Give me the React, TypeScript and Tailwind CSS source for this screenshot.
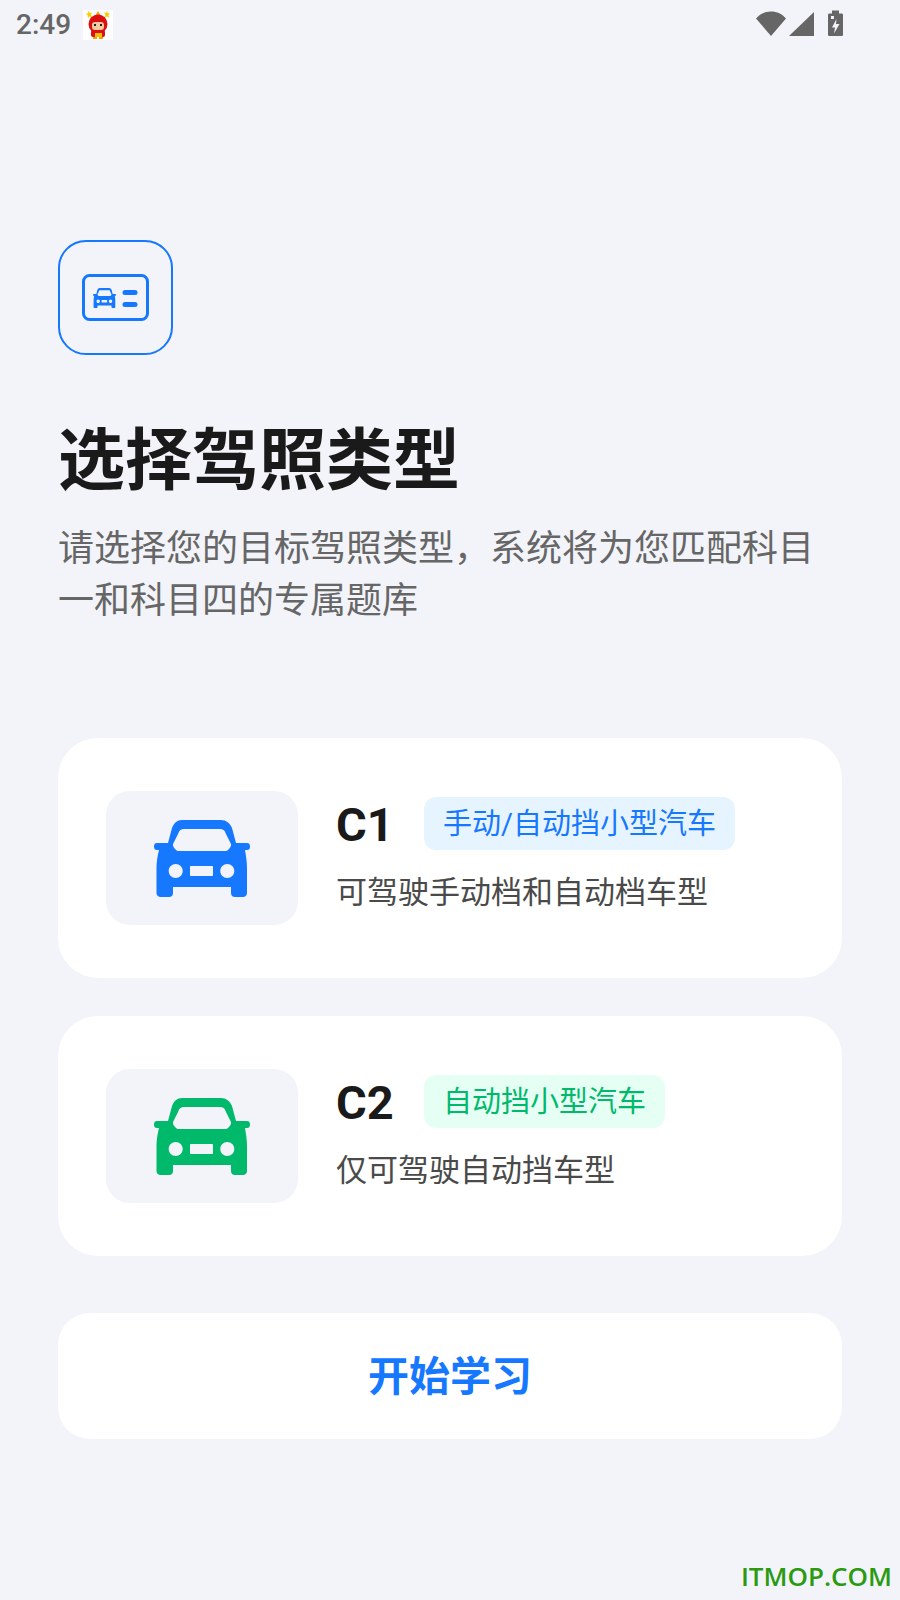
import React from 'react';

const CAR_PATH =
    'M28 0H67C72 0 76 3 78 8L82 23H93C95 23 96 24 96 26.500C96 29 95 30 93 30H91C92 36 93 42 93 48V73C93 75.500 91 77 89 77H81C78.500 77 77 75.500 77 73V67H19V73C19 75.500 17.500 77 15 77H6.500C4.500 77 2.500 75.500 2.500 73V48C2.500 42 3.500 36 5 30H3C1 30 0 29 0 26.500C0 24 1 23 3 23H14L18 8C20 3 23 0 28 0ZM30 9C27 9 25.500 10 24.500 13L19 24C18.500 26 20 28 22 30C23 31 24 31 26 31H70C72 31 73 31 74 30C76 28 77.500 26 77 24L71.500 13C70.500 10 69 9 66 9H30ZM21.700 44C17.800 44 14.700 47.100 14.700 51C14.700 54.900 17.800 58 21.700 58C25.600 58 28.700 54.900 28.700 51C28.700 47.100 25.600 44 21.700 44ZM73.300 44C69.400 44 66.300 47.100 66.300 51C66.300 54.900 69.400 58 73.300 58C77.200 58 80.300 54.900 80.300 51C80.300 47.100 77.200 44 73.300 44ZM37 46C36.400 46 36 46.400 36 47V55C36 55.600 36.400 56 37 56H58C58.600 56 59 55.600 59 55V47C59 46.400 58.600 46 58 46H37Z';

const CarIcon = ({ color }: { color: string }) => (
    <svg width="96" height="77" viewBox="0 0 96 77" fill="none" className="blur-[0.3px]">
        <path fillRule="evenodd" clipRule="evenodd" fill={color} d={CAR_PATH} />
    </svg>
);

const LicenceIcon = () => (
    <svg width="67" height="47" viewBox="0 0 67 47" fill="none" className="blur-[0.5px]">
        <rect x="1.500" y="1.500" width="64" height="44" rx="6" stroke="#1677ff" strokeWidth="3" />
        <svg x="11" y="14" width="23" height="20" viewBox="0 0 96 77" preserveAspectRatio="none">
            <path fillRule="evenodd" clipRule="evenodd" fill="#1677ff" d={CAR_PATH} />
        </svg>
        <rect x="40.500" y="16" width="15" height="5" rx="2.500" fill="#1677ff" />
        <rect x="40.500" y="28" width="15" height="5" rx="2.500" fill="#1677ff" />
    </svg>
);

// tiny pixel mascot next to the clock
const Mascot = () => (
    <svg width="30" height="30" viewBox="0 0 30 30" className="bg-white">
        <path fill="#f0a000" d="M15 1L18 6L21 9H9L12 6Z" />
        <path fill="#f5d000" d="M5 1L7 3L9 2.500L8 5L9 7L6.500 6.500L5 8L4.500 5L2.500 3.500L5 3.500Z" />
        <path fill="#f5d000" d="M24 1L25 3.500L27.500 3.500L25.500 5L26 8L24 6.500L21.500 7L22.500 5L21 2.500L23 3Z" />
        <circle cx="15" cy="14" r="9.500" fill="#dc1010" />
        <rect x="8" y="20" width="14" height="7" rx="2" fill="#dc1010" />
        <rect x="9" y="12" width="12" height="8" rx="3" fill="#f6c8a0" />
        <rect x="11" y="14" width="2" height="2" fill="#222" />
        <rect x="17" y="14" width="2" height="2" fill="#222" />
        <rect x="12" y="23" width="7" height="4" fill="#f5c000" />
        <rect x="10" y="27" width="4" height="2" fill="#f5a000" />
        <rect x="16" y="27" width="4" height="2" fill="#f5a000" />
    </svg>
);

const StatusIcons = () => (
    <svg width="87" height="30" viewBox="0 0 87 30" fill="#666">
        <path d="M0 8.500C4 4 9 1.500 15 1.500C21 1.500 26 4 30 8.500L15 26Z" />
        <path d="M33 26L58 2V26Z" />
        <path d="M72 5C72 4 72.500 3.500 73.500 3.500H76V0.500H83V3.500H85.500C86.500 3.500 87 4 87 5V24.500C87 25.500 86.500 26 85.500 26H73.500C72.500 26 72 25.500 72 24.500Z" />
        <path fill="#f2f4f9" d="M80.500 9L76 17.500H79L78 23.500L83.500 14H80Z" />
        <rect x="75" y="6" width="3" height="3" fill="#f2f4f9" />
    </svg>
);

interface LicenceCardProps {
    code: string;
    tag: string;
    desc: string;
    color: string;
    tagBg: string;
}

const LicenceCard = ({ code, tag, desc, color, tagBg }: LicenceCardProps) => (
    <div className="flex h-[240px] items-center rounded-[40px] bg-white pl-[48px]">
        <div className="flex h-[134px] w-[192px] items-center justify-center rounded-[24px] bg-[#f2f4f9]">
            <CarIcon color={color} />
        </div>
        <div className="ml-[38px] flex flex-col pb-[8px]">
            <div className="flex h-[60px] items-center">
                <span className="w-[88px] pt-[2px] text-[47px] leading-[54px] font-bold text-[#1a1a1a]">{code}</span>
                <span
                    className="flex h-[53px] items-center rounded-[12px] px-[19px] pt-[3px] text-[29px]"
                    style={{ color, backgroundColor: tagBg }}
                >
                    {tag}
                </span>
            </div>
            <div className="mt-[17px] text-[31px] leading-[44px] text-[#4a4a4a]">{desc}</div>
        </div>
    </div>
);

export default function App() {
    return (
        <div
            className="relative flex h-[1600px] w-[900px] flex-col overflow-hidden bg-[#f2f4f9]"
            style={{ fontFamily: 'Roboto, "Noto Sans CJK SC", sans-serif' }}
        >
            {/* Status bar */}
            <div className="flex h-[50px] items-center pl-[16px] pr-[57px]">
                <span className="text-[28px] font-medium text-[#666]">2:49</span>
                <span className="ml-[12px]"><Mascot /></span>
                <span className="ml-auto"><StatusIcons /></span>
            </div>

            <div className="flex flex-1 flex-col px-[58px] pt-[190px]">
                <div className="flex h-[115px] w-[115px] items-center justify-center rounded-[28px] border-2 border-[#1677ff]">
                    <LicenceIcon />
                </div>

                <h1 className="mt-[66px] text-[67px] leading-[80px] font-bold text-[#1a1a1a]">选择驾照类型</h1>
                <p className="mt-[22px] text-[36px] leading-[52px] text-[#666]">
                    请选择您的目标驾照类型，系统将为您匹配科目
                    <br />
                    一和科目四的专属题库
                </p>

                <div className="mt-[111px] flex flex-col gap-[38px]">
                    <LicenceCard code="C1" tag="手动/自动挡小型汽车" desc="可驾驶手动档和自动档车型" color="#1677ff" tagBg="#e6f4ff" />
                    <LicenceCard code="C2" tag="自动挡小型汽车" desc="仅可驾驶自动挡车型" color="#00b96b" tagBg="#e6fff4" />
                </div>

                <button className="mt-[57px] h-[126px] rounded-[32px] bg-white pt-[4px] text-[41px] font-bold text-[#1677ff]">
                    开始学习
                </button>
            </div>

            <span className="absolute bottom-[4px] right-[8px] text-[26px] font-semibold text-[#2a9a10]" style={{ fontFamily: '"Open Sans", sans-serif' }}>
                ITMOP.COM
            </span>
        </div>
    );
}
